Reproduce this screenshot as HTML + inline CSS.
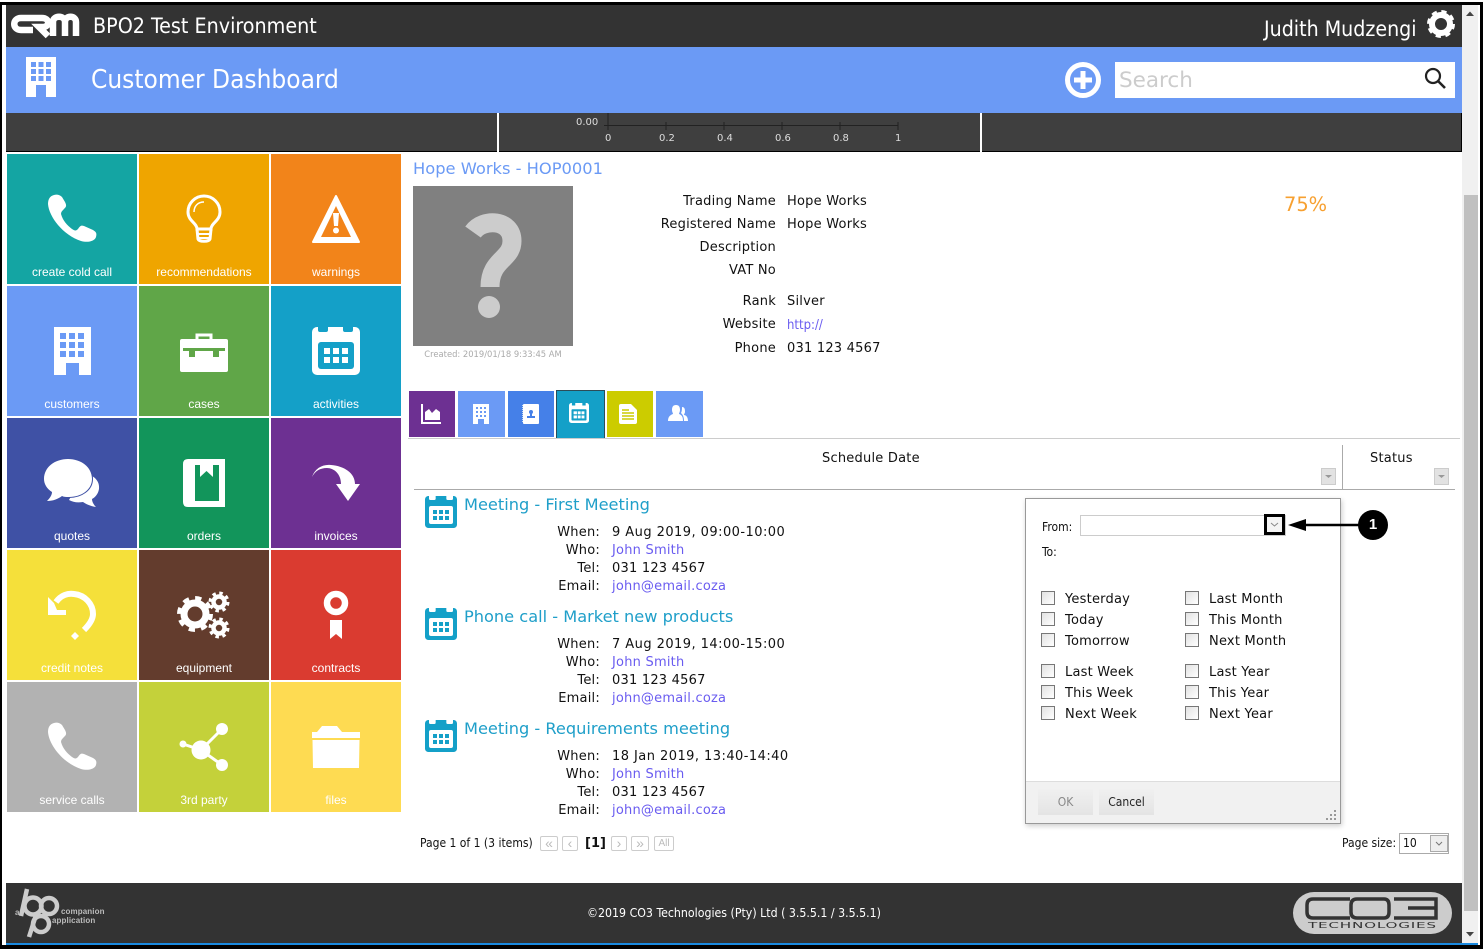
<!DOCTYPE html>
<html><head><meta charset="utf-8"><title>Customer Dashboard</title>
<style>
html,body{margin:0;padding:0;background:#fff}
body{width:1484px;height:949px;position:relative;overflow:hidden;font-family:"DejaVu Sans","Liberation Sans",sans-serif;font-size:13px;color:#111;letter-spacing:.22px}
.a{position:absolute}
.t{position:absolute;white-space:nowrap;line-height:24px;height:24px}
.r{text-align:right}
.c{font-family:"DejaVu Sans Condensed","DejaVu Sans",sans-serif;font-stretch:condensed;letter-spacing:0}
.tile{position:absolute;width:130px;height:130px;color:#fff}
.tile svg{position:absolute;left:41px;top:41px;overflow:visible}
.tile span{position:absolute;left:0;width:130px;top:110px;text-align:center;font:12px/16px "Liberation Sans",sans-serif;color:#fff;letter-spacing:0}
.tab{position:absolute;top:391px;height:46px}
.lnk{color:#6a5cf0}
.ttl{color:#1f9fc9;font-size:16.2px;letter-spacing:0}
.d{letter-spacing:.45px}
.ch{font-size:10px;color:#ddd;letter-spacing:0}
.cb{position:absolute;width:12px;height:12px;border:1px solid #777;background:linear-gradient(135deg,#e2e2e2,#fff)}
.pb{position:absolute;top:836px;height:13px;border:1px solid #ccc;border-radius:2px;color:#bbb;font:14px/12px "Liberation Sans",sans-serif;text-align:center;letter-spacing:0}
svg{display:block}
</style></head><body>
<svg width="0" height="0" style="position:absolute"><defs>
<symbol id="phone" viewBox="0 0 48 48" overflow="visible"><path fill="#fff" d="M6 0C2 1 0 4 0 9C1 22 15 40 33 46C40 48 47 46 48 42C49 38 48 37 45 35L36 31C33 30 32 31 30 34C28 36 27 36 24 34C19 30 15 26 13 19C13 17 14 16 16 14C18 12 19 11 17 7L14 2C12 0 9-1 6 0Z"/></symbol>
</defs></svg>

<!-- outer frame -->
<div class="a" style="left:0;top:2px;width:1483px;height:3px;background:#000"></div>
<div class="a" style="left:0;top:2px;width:2px;height:947px;background:#000"></div>
<div class="a" style="left:1480px;top:2px;width:3px;height:947px;background:#000"></div>
<div class="a" style="left:0;top:945px;width:1483px;height:4px;background:#000"></div>

<!-- header -->
<div class="a" style="left:6px;top:5px;width:1456px;height:42px;background:#333"></div>
<svg class="a" style="left:6px;top:5px" width="80" height="36" viewBox="6 5 80 36"><g fill="none" stroke="#fff" stroke-width="6.5"><path d="M37 18H21C12 18 12 30 21 30H33"/><path d="M37 18H42C50 18 50 27 43 27H39L48 36"/><path d="M53 36V22C53 15 65 15 65 22V36M65 22C65 15 76 15 76 22V36"/></g></svg>
<div class="t c" style="left:93px;top:15px;font-size:21.3px;color:#fff">BPO2 Test Environment</div>
<div class="t c" style="left:1264px;top:17px;font-size:21.2px;color:#fff">Judith Mudzengi</div>
<svg class="a" style="left:1427px;top:10px" width="28" height="28" viewBox="0 0 28 28"><circle cx="14" cy="14" r="9" fill="none" stroke="#fff" stroke-width="6"/><circle cx="14" cy="14" r="12" fill="none" stroke="#fff" stroke-width="4" stroke-dasharray="5 4.42"/></svg>

<!-- blue bar -->
<div class="a" style="left:6px;top:47px;width:1456px;height:66px;background:#6b9af5"></div>
<svg class="a" style="left:25px;top:57px" width="32" height="40" viewBox="0 0 32 40"><path fill="#fff" d="M1 0H31V40H21V28H11V40H1Z"/><g fill="#6b9af5"><rect x="6" y="5" width="5" height="5"/><rect x="13.500" y="5" width="5" height="5"/><rect x="21" y="5" width="5" height="5"/><rect x="6" y="12" width="5" height="5"/><rect x="13.500" y="12" width="5" height="5"/><rect x="21" y="12" width="5" height="5"/><rect x="6" y="19" width="5" height="5"/><rect x="13.500" y="19" width="5" height="5"/><rect x="21" y="19" width="5" height="5"/></g></svg>
<div class="t c" style="left:91px;top:68px;font-size:26px;color:#fff">Customer Dashboard</div>
<svg class="a" style="left:1065px;top:62px" width="36" height="36" viewBox="0 0 36 36"><circle cx="18" cy="18" r="15.500" fill="none" stroke="#fff" stroke-width="5"/><path d="M18 9V27M9 18H27" stroke="#fff" stroke-width="5"/></svg>
<div class="a" style="left:1115px;top:62px;width:340px;height:36px;background:#fff"></div>
<div class="t" style="left:1119px;top:69px;font-size:21.5px;color:#ccc;letter-spacing:0">Search</div>
<svg class="a" style="left:1424px;top:67px" width="22" height="22" viewBox="0 0 22 22"><circle cx="9" cy="9" r="7" fill="none" stroke="#222" stroke-width="2.200"/><path d="M14 14L21 21" stroke="#222" stroke-width="2.600"/></svg>

<!-- chart strip -->
<div class="a" style="left:6px;top:113px;width:1455px;height:38px;background:#3f3f3f;border-right:1px solid #000;border-bottom:1.500px solid #000"></div>
<div class="a" style="left:497px;top:113px;width:2px;height:39px;background:#fff"></div>
<div class="a" style="left:980px;top:113px;width:2px;height:39px;background:#fff"></div>
<svg class="a" style="left:600px;top:113px" width="305" height="18" viewBox="600 113 305 18"><path d="M608 113V130M604 125.500H898M666 122V130M724 122V130M782 122V130M840 122V130M898 122V130" stroke="#222" fill="none"/></svg>
<div class="t ch" style="left:576px;top:111px">0.00</div>
<div class="t ch" style="left:605px;top:127px">0</div>
<div class="t ch" style="left:659px;top:127px">0.2</div>
<div class="t ch" style="left:717px;top:127px">0.4</div>
<div class="t ch" style="left:775px;top:127px">0.6</div>
<div class="t ch" style="left:833px;top:127px">0.8</div>
<div class="t ch" style="left:895px;top:127px">1</div>

<!-- tiles -->
<div class="tile" style="left:7px;top:154px;background:#14a5a3"><svg width="48" height="48"><use href="#phone"/></svg><span>create cold call</span></div>

<div class="tile" style="left:139px;top:154px;background:#efa500"><svg width="48" height="48" viewBox="0 0 48 48"><g fill="none" stroke="#fff"><path stroke-width="3" d="M17 34C17 28 8 26 8 17A16 16 0 0 1 40 17C40 26 31 28 31 34Z"/><path stroke-width="1.500" d="M14 17C14 11 18 7 24 7"/><path stroke-width="3" d="M17 34L18 44C19 47 29 47 30 44L31 34"/><path stroke-width="2" d="M18 39H30M19 43H29"/></g></svg><span>recommendations</span></div>

<div class="tile" style="left:271px;top:154px;background:#f2841a"><svg width="48" height="48" viewBox="0 0 48 48"><path fill="#fff" stroke="#fff" stroke-width="2" stroke-linejoin="round" d="M24 1L47 47H1Z"/><path fill="#f2841a" d="M24 11L39 42H9Z"/><path fill="#fff" d="M21 18H27L26 31H22Z"/><circle cx="24" cy="35.500" r="3" fill="#fff"/></svg><span>warnings</span></div>

<div class="tile" style="left:7px;top:286px;background:#6b9af5"><svg width="48" height="48" viewBox="0 0 48 48"><path fill="#fff" d="M6 0H43V48H31V36H18V48H6Z"/><g fill="#6b9af5"><rect x="12" y="6" width="6" height="6"/><rect x="21" y="6" width="6" height="6"/><rect x="30" y="6" width="6" height="6"/><rect x="12" y="15" width="6" height="6"/><rect x="21" y="15" width="6" height="6"/><rect x="30" y="15" width="6" height="6"/><rect x="12" y="24" width="6" height="6"/><rect x="21" y="24" width="6" height="6"/><rect x="30" y="24" width="6" height="6"/></g></svg><span>customers</span></div>

<div class="tile" style="left:139px;top:286px;background:#60a648"><svg width="48" height="48" viewBox="0 0 48 48"><path fill="none" stroke="#fff" stroke-width="3" d="M17 13V8H31V13"/><rect x="0" y="12" width="48" height="33" rx="2" fill="#fff"/><path fill="#60a648" d="M3 21H45V24H39V30H33V24H15V30H9V24H3Z"/></svg><span>cases</span></div>

<div class="tile" style="left:271px;top:286px;background:#14a0c8"><svg width="48" height="48" viewBox="0 0 48 48"><rect width="48" height="48" rx="5" fill="#fff"/><g fill="#14a0c8"><path d="M6 0H16V3Q16 5 14 5H8Q6 5 6 3ZM31 0H41V3Q41 5 39 5H33Q31 5 31 3Z"/><rect x="6" y="15" width="36" height="27" rx="3"/></g><g fill="#fff"><rect x="12" y="21" width="6" height="6"/><rect x="21" y="21" width="6" height="6"/><rect x="30" y="21" width="6" height="6"/><rect x="12" y="30" width="6" height="6"/><rect x="21" y="30" width="6" height="6"/><rect x="30" y="30" width="6" height="6"/></g></svg><span>activities</span></div>

<div class="tile" style="left:7px;top:418px;background:#3f51a5"><svg width="48" height="48" viewBox="0 0 48 48"><path fill="#fff" d="M36 14C46 16 52 22 51 30C50 36 46 39 44 40C44 43 46 46 48 48C42 47 38 45 35 43C29 44 25 43 21 41Z"/><path fill="#fff" stroke="#3f51a5" stroke-width="2" paint-order="stroke" d="M20 0C33 0 44 8 44 20C44 31 33 38 21 38C18 38 16 38 14 37C10 40 5 42-1 42C2 39 4 36 4 33C-1 30-4 25-4 20C-4 8 7 0 20 0Z"/></svg><span>quotes</span></div>

<div class="tile" style="left:139px;top:418px;background:#12955b"><svg width="48" height="48" viewBox="0 0 48 48"><path fill="#fff" d="M8 0H45V48H8Q3 48 3 43V5Q3 0 8 0Z"/><path fill="#12955b" d="M15 6H20V18L26.500 12L33 18V6H39V42H15Z"/></svg><span>orders</span></div>

<div class="tile" style="left:271px;top:418px;background:#6d3092"><svg width="48" height="48" viewBox="0 0 48 48"><path fill="#fff" d="M0 18C3 9 11 5 19 6C32 7 43 14 43 25H48L36 42L24 25H29C29 15 22 9 15 9C8 9 3 12 0 18Z"/></svg><span>invoices</span></div>

<div class="tile" style="left:7px;top:550px;background:#f5e03a"><svg width="48" height="48" viewBox="0 0 48 48"><path fill="#fff" d="M0 6V24H18V19H9L6 12Z"/><path fill="none" stroke="#fff" stroke-width="6" d="M8 11C13 4 20 2 26 3C37 4 45 13 45 23C45 29 40 35 36 39"/><path fill="#fff" d="M27 41L31 45L27 49L23 45Z"/></svg><span>credit notes</span></div>

<div class="tile" style="left:139px;top:550px;background:#633c2d"><svg width="48" height="48" viewBox="0 0 48 48"><g fill="none" stroke="#fff"><circle cx="15" cy="23" r="11" stroke-width="7"/><circle cx="15" cy="23" r="16" stroke-width="4" stroke-dasharray="6.300 6.270"/><circle cx="39" cy="11" r="5.500" stroke-width="4.500"/><circle cx="39" cy="11" r="9" stroke-width="3" stroke-dasharray="3.500 3.570"/><circle cx="39" cy="37" r="5.500" stroke-width="4.500"/><circle cx="39" cy="37" r="9" stroke-width="3" stroke-dasharray="3.500 3.570"/></g></svg><span>equipment</span></div>

<div class="tile" style="left:271px;top:550px;background:#da3b30"><svg width="48" height="48" viewBox="0 0 48 48"><circle cx="24" cy="12" r="9" fill="none" stroke="#fff" stroke-width="6.500"/><path fill="#fff" d="M18 29H30V48L24 43L18 48Z"/></svg><span>contracts</span></div>

<div class="tile" style="left:7px;top:682px;background:#b2b2b2"><svg width="48" height="48"><use href="#phone"/></svg><span>service calls</span></div>

<div class="tile" style="left:139px;top:682px;background:#c4d13a"><svg width="48" height="48" viewBox="0 0 48 48"><path fill="none" stroke="#fff" stroke-width="3" d="M3 21L21 27M21 27L42 6M21 27L42 42"/><g fill="#fff"><circle cx="21" cy="27" r="9.500"/><circle cx="42" cy="6" r="6"/><circle cx="42" cy="42" r="6"/><circle cx="3" cy="21" r="3.500"/></g></svg><span>3rd party</span></div>

<div class="tile" style="left:271px;top:682px;background:#fedb52"><svg width="48" height="48" viewBox="0 0 48 48"><path fill="#fff" d="M5 9L10 3H25L30 9H48V15H0V9ZM0.500 17H47.500L47 45H1Z"/></svg><span>files</span></div>

<!-- customer info -->
<div class="t" style="left:413px;top:157px;font-size:16.3px;color:#6b9af5;letter-spacing:0">Hope Works - HOP0001</div>
<div class="a" style="left:413px;top:186px;width:160px;height:160px;background:#808080"></div>
<svg class="a" style="left:413px;top:186px" width="160" height="160" viewBox="413 186 160 160"><path d="M473 232C483 218 512 219 512 241C512 260 490 259 490 287" fill="none" stroke="#ccc" stroke-width="19"/><circle cx="489" cy="307" r="11" fill="#ccc"/></svg>
<div class="t" style="left:413px;top:342px;width:160px;text-align:center;font-size:8.4px;color:#aaa;letter-spacing:0">Created: 2019/01/18 9:33:45 AM</div>

<div class="t r" style="left:576px;width:200px;top:190px">Trading Name</div><div class="t" style="left:787px;top:190px">Hope Works</div>
<div class="t r" style="left:576px;width:200px;top:213px">Registered Name</div><div class="t" style="left:787px;top:213px">Hope Works</div>
<div class="t r" style="left:576px;width:200px;top:236px">Description</div>
<div class="t r" style="left:576px;width:200px;top:259px">VAT No</div>
<div class="t r" style="left:576px;width:200px;top:290px">Rank</div><div class="t" style="left:787px;top:290px">Silver</div>
<div class="t r" style="left:576px;width:200px;top:313px">Website</div><div class="t lnk c" style="left:787px;top:314px;font-size:13px">http://</div>
<div class="t r" style="left:576px;width:200px;top:337px">Phone</div><div class="t" style="left:787px;top:337px">031 123 4567</div>
<div class="t" style="left:1284px;top:193px;font-size:19.4px;color:#f7a030;letter-spacing:0">75%</div>

<!-- tabs -->
<div class="tab" style="left:409px;width:46px;background:#6d3092"><svg class="a" style="left:12px;top:13px" width="20" height="20" viewBox="0 0 20 20"><path fill="none" stroke="#fff" stroke-width="2" d="M1 0V19H20"/><path fill="#fff" d="M4 16V8L8 5L11 9L15 5L19 8V16Z"/></svg></div>
<div class="tab" style="left:458px;width:47px;background:#6b9af5"><svg class="a" style="left:15px;top:13px" width="16" height="20" viewBox="0 0 16 20"><path fill="#fff" d="M0 0H16V20H11V15H5V20H0Z"/><g fill="#6b9af5"><rect x="3" y="3" width="2" height="2"/><rect x="7" y="3" width="2" height="2"/><rect x="11" y="3" width="2" height="2"/><rect x="3" y="7" width="2" height="2"/><rect x="7" y="7" width="2" height="2"/><rect x="11" y="7" width="2" height="2"/><rect x="3" y="11" width="2" height="2"/><rect x="7" y="11" width="2" height="2"/><rect x="11" y="11" width="2" height="2"/></g></svg></div>
<div class="tab" style="left:508px;width:46px;background:#4580e8"><svg class="a" style="left:14px;top:13px" width="17" height="20" viewBox="0 0 17 20"><rect x="1" width="16" height="20" rx="1" fill="#fff"/><path stroke="#cde" stroke-width="1" stroke-dasharray="1 1" d="M.5 1V19"/><circle cx="9" cy="8" r="2" fill="#4580e8"/><path fill="#4580e8" d="M8 8H10V12H13V14H5V12H8Z"/></svg></div>
<div class="tab" style="left:556px;top:390px;width:47px;height:48px;background:#14a0c8;border:1px solid #2c4c58;border-bottom:0"><svg class="a" style="left:12px;top:12px" width="20" height="20" viewBox="0 0 48 48"><rect width="48" height="48" rx="6" fill="#fff"/><g fill="#14a0c8"><path d="M7 0H15V6H7ZM32 0H40V6H32Z"/><rect x="6" y="15" width="36" height="27" rx="2"/></g><g fill="#fff"><rect x="11" y="20" width="8" height="7"/><rect x="21" y="20" width="7" height="7"/><rect x="30" y="20" width="7" height="7"/><rect x="11" y="30" width="8" height="7"/><rect x="21" y="30" width="7" height="7"/><rect x="30" y="30" width="7" height="7"/></g></svg></div>
<div class="tab" style="left:607px;width:46px;background:#cccc00"><svg class="a" style="left:12px;top:13px" width="18" height="20" viewBox="0 0 18 20"><path fill="#fff" d="M2 0H12L18 6V18Q18 20 16 20H2Q0 20 0 18V2Q0 0 2 0Z"/><path stroke="#cccc00" stroke-width="1.500" d="M3 9H15M3 12H15M3 15H15M3 6H10"/></svg></div>
<div class="tab" style="left:656px;width:47px;background:#6b9af5"><svg class="a" style="left:12px;top:14px" width="20" height="17" viewBox="0 0 20 17"><path fill="#fff" d="M8 0C11 0 12 2 12 5C12 7 11 8 11 9C14 10 15 12 15 16H0C0 12 2 10 5 9C5 8 4 7 4 5C4 2 5 0 8 0Z"/><path fill="#fff" d="M14 2C17 2 17 5 17 7C17 8 16 9 16 10C18 10 20 12 20 16H16C16 12 15 10 13 8C14 6 14 4 14 2Z"/></svg></div>
<div class="a" style="left:408px;top:438px;width:1052px;height:1px;background:#ccc"></div>

<!-- table header -->
<div class="t" style="left:822px;top:447px">Schedule Date</div>
<div class="t" style="left:1370px;top:447px">Status</div>
<div class="a" style="left:1342px;top:445px;width:1px;height:44px;background:#aaa"></div>
<div class="a" style="left:414px;top:489px;width:1041px;height:1px;background:#aaa"></div>
<svg class="a" style="left:1321px;top:468px" width="15" height="17" viewBox="0 0 15 17"><rect x=".5" y=".5" width="14" height="16" fill="#e2e2e2" stroke="#ccc"/><path d="M4 7H11L7.500 10Z" fill="#999"/></svg>
<svg class="a" style="left:1434px;top:468px" width="15" height="17" viewBox="0 0 15 17"><rect x=".5" y=".5" width="14" height="16" fill="#e2e2e2" stroke="#ccc"/><path d="M4 7H11L7.500 10Z" fill="#999"/></svg>

<!-- activity 1 -->
<svg class="a" style="left:425px;top:496px" width="32" height="32" viewBox="0 0 48 48"><rect width="48" height="48" rx="5" fill="#14a0c8"/><g fill="#fff"><path d="M6 0H16V4Q16 6 14 6H8Q6 6 6 4ZM32 0H42V4Q42 6 40 6H34Q32 6 32 4Z"/><rect x="6" y="15" width="36" height="27" rx="3"/></g><g fill="#14a0c8"><rect x="12" y="21" width="6" height="6"/><rect x="21" y="21" width="6" height="6"/><rect x="30" y="21" width="6" height="6"/><rect x="12" y="30" width="6" height="6"/><rect x="21" y="30" width="6" height="6"/><rect x="30" y="30" width="6" height="6"/></g></svg>
<div class="t ttl" style="left:464px;top:493px">Meeting - First Meeting</div>
<div class="t r" style="left:500px;width:100px;top:521px">When:</div><div class="t d" style="left:612px;top:521px">9 Aug 2019, 09:00-10:00</div>
<div class="t r" style="left:500px;width:100px;top:539px">Who:</div><div class="t lnk" style="left:612px;top:539px">John Smith</div>
<div class="t r" style="left:500px;width:100px;top:557px">Tel:</div><div class="t" style="left:612px;top:557px">031 123 4567</div>
<div class="t r" style="left:500px;width:100px;top:575px">Email:</div><div class="t lnk" style="left:612px;top:575px">john@email.coza</div>

<!-- activity 2 -->
<svg class="a" style="left:425px;top:608px" width="32" height="32" viewBox="0 0 48 48"><rect width="48" height="48" rx="5" fill="#14a0c8"/><g fill="#fff"><path d="M6 0H16V4Q16 6 14 6H8Q6 6 6 4ZM32 0H42V4Q42 6 40 6H34Q32 6 32 4Z"/><rect x="6" y="15" width="36" height="27" rx="3"/></g><g fill="#14a0c8"><rect x="12" y="21" width="6" height="6"/><rect x="21" y="21" width="6" height="6"/><rect x="30" y="21" width="6" height="6"/><rect x="12" y="30" width="6" height="6"/><rect x="21" y="30" width="6" height="6"/><rect x="30" y="30" width="6" height="6"/></g></svg>
<div class="t ttl" style="left:464px;top:605px">Phone call - Market new products</div>
<div class="t r" style="left:500px;width:100px;top:633px">When:</div><div class="t d" style="left:612px;top:633px">7 Aug 2019, 14:00-15:00</div>
<div class="t r" style="left:500px;width:100px;top:651px">Who:</div><div class="t lnk" style="left:612px;top:651px">John Smith</div>
<div class="t r" style="left:500px;width:100px;top:669px">Tel:</div><div class="t" style="left:612px;top:669px">031 123 4567</div>
<div class="t r" style="left:500px;width:100px;top:687px">Email:</div><div class="t lnk" style="left:612px;top:687px">john@email.coza</div>

<!-- activity 3 -->
<svg class="a" style="left:425px;top:720px" width="32" height="32" viewBox="0 0 48 48"><rect width="48" height="48" rx="5" fill="#14a0c8"/><g fill="#fff"><path d="M6 0H16V4Q16 6 14 6H8Q6 6 6 4ZM32 0H42V4Q42 6 40 6H34Q32 6 32 4Z"/><rect x="6" y="15" width="36" height="27" rx="3"/></g><g fill="#14a0c8"><rect x="12" y="21" width="6" height="6"/><rect x="21" y="21" width="6" height="6"/><rect x="30" y="21" width="6" height="6"/><rect x="12" y="30" width="6" height="6"/><rect x="21" y="30" width="6" height="6"/><rect x="30" y="30" width="6" height="6"/></g></svg>
<div class="t ttl" style="left:464px;top:717px">Meeting - Requirements meeting</div>
<div class="t r" style="left:500px;width:100px;top:745px">When:</div><div class="t d" style="left:612px;top:745px">18 Jan 2019, 13:40-14:40</div>
<div class="t r" style="left:500px;width:100px;top:763px">Who:</div><div class="t lnk" style="left:612px;top:763px">John Smith</div>
<div class="t r" style="left:500px;width:100px;top:781px">Tel:</div><div class="t" style="left:612px;top:781px">031 123 4567</div>
<div class="t r" style="left:500px;width:100px;top:799px">Email:</div><div class="t lnk" style="left:612px;top:799px">john@email.coza</div>

<!-- pager -->
<div class="t c" style="left:420px;top:831px;font-size:12px">Page 1 of 1 (3 items)</div>
<div class="pb" style="left:540px;width:16px">&#171;</div>
<div class="pb" style="left:562px;width:14px">&#8249;</div>
<div class="t" style="left:585px;top:832px;font-size:13px;font-weight:bold;letter-spacing:0">[1]</div>
<div class="pb" style="left:611px;width:14px">&#8250;</div>
<div class="pb" style="left:631px;width:16px">&#187;</div>
<div class="pb" style="left:654px;width:18px;font-size:10px;line-height:14px">All</div>
<div class="t c" style="left:1342px;top:831px;font-size:12px">Page size:</div>
<div class="a" style="left:1399px;top:833px;width:48px;height:19px;border:1px solid #aaa"></div>
<div class="t c" style="left:1403px;top:831px;font-size:12px">10</div>
<svg class="a" style="left:1430px;top:835px" width="18" height="17" viewBox="0 0 18 17"><rect x=".5" y=".5" width="17" height="16" fill="#eee" stroke="#aaa"/><path d="M6 7L9 10L12 7" fill="none" stroke="#777"/></svg>

<!-- dialog -->
<div class="a" style="left:1025px;top:498px;width:314px;height:324px;background:#fff;border:1px solid #999;box-shadow:1px 2px 5px rgba(0,0,0,.2)"></div>
<div class="a" style="left:1026px;top:781px;width:314px;height:42px;background:#f1f1f1;border-top:1px solid #ddd;box-sizing:border-box"></div>
<div class="t c" style="left:1042px;top:515px;font-size:12px">From:</div>
<div class="a" style="left:1080px;top:515px;width:204px;height:19px;border:1px solid #ccc"></div>
<svg class="a" style="left:1264px;top:514px" width="21" height="21" viewBox="0 0 21 21"><rect x="1.500" y="1.500" width="18" height="18" fill="#f4f4f4" stroke="#000" stroke-width="3"/><path d="M7 9L10.500 12L14 9" fill="none" stroke="#888"/></svg>
<div class="t c" style="left:1042px;top:540px;font-size:12px">To:</div>

<div class="cb" style="left:1041px;top:591px"></div><div class="t" style="left:1065px;top:588px">Yesterday</div>
<div class="cb" style="left:1041px;top:612px"></div><div class="t" style="left:1065px;top:609px">Today</div>
<div class="cb" style="left:1041px;top:633px"></div><div class="t" style="left:1065px;top:630px">Tomorrow</div>
<div class="cb" style="left:1041px;top:664px"></div><div class="t" style="left:1065px;top:661px">Last Week</div>
<div class="cb" style="left:1041px;top:685px"></div><div class="t" style="left:1065px;top:682px">This Week</div>
<div class="cb" style="left:1041px;top:706px"></div><div class="t" style="left:1065px;top:703px">Next Week</div>
<div class="cb" style="left:1185px;top:591px"></div><div class="t" style="left:1209px;top:588px">Last Month</div>
<div class="cb" style="left:1185px;top:612px"></div><div class="t" style="left:1209px;top:609px">This Month</div>
<div class="cb" style="left:1185px;top:633px"></div><div class="t" style="left:1209px;top:630px">Next Month</div>
<div class="cb" style="left:1185px;top:664px"></div><div class="t" style="left:1209px;top:661px">Last Year</div>
<div class="cb" style="left:1185px;top:685px"></div><div class="t" style="left:1209px;top:682px">This Year</div>
<div class="cb" style="left:1185px;top:706px"></div><div class="t" style="left:1209px;top:703px">Next Year</div>

<div class="a" style="left:1038px;top:789px;width:55px;height:26px;background:linear-gradient(#f0f0f0,#e4e4e4)"></div>
<div class="t c" style="left:1038px;top:790px;width:55px;text-align:center;font-size:12px;color:#888">OK</div>
<div class="a" style="left:1099px;top:789px;width:55px;height:26px;background:linear-gradient(#f0f0f0,#e4e4e4)"></div>
<div class="t c" style="left:1099px;top:790px;width:55px;text-align:center;font-size:12px;color:#222">Cancel</div>
<svg class="a" style="left:1326px;top:809px" width="12" height="12" viewBox="0 0 12 12"><g fill="#999"><rect x="8" y="1" width="2" height="2"/><rect x="4" y="5" width="2" height="2"/><rect x="8" y="5" width="2" height="2"/><rect y="9" width="2" height="2"/><rect x="4" y="9" width="2" height="2"/><rect x="8" y="9" width="2" height="2"/></g></svg>

<!-- callout -->
<svg class="a" style="left:1285px;top:508px" width="106" height="34" viewBox="1285 508 106 34"><path d="M1300 525H1362" stroke="#000" stroke-width="2.500"/><path d="M1288 525L1306 519V531Z" fill="#000"/><circle cx="1373" cy="525" r="15" fill="#000"/></svg>
<div class="t" style="left:1358px;top:515px;width:30px;text-align:center;font:bold 15px/20px 'Liberation Sans',sans-serif;color:#fff;letter-spacing:0">1</div>

<!-- footer -->
<div class="a" style="left:6px;top:883px;width:1456px;height:60px;background:#333"></div>
<div class="a" style="left:6px;top:943px;width:1472px;height:1.500px;background:#1a8ae0"></div>
<svg class="a" style="left:10px;top:885px" width="60" height="56" viewBox="10 885 60 56"><g fill="none" stroke="#ccc" stroke-width="4.500"><circle cx="33" cy="906" r="8.500"/><path d="M27 889L21 916"/><circle cx="49" cy="906" r="8"/><circle cx="41" cy="924" r="8"/><path d="M36 915L29 937"/></g></svg>
<div class="t" style="left:15px;top:903px;font:bold 8px/20px 'Liberation Sans',sans-serif;color:#bbb;letter-spacing:0">a</div>
<div class="t" style="left:61px;top:902px;font:bold 8px/20px 'Liberation Sans',sans-serif;color:#bbb;letter-spacing:.1px">companion</div>
<div class="t" style="left:52px;top:911px;font:bold 8px/20px 'Liberation Sans',sans-serif;color:#bbb;letter-spacing:.1px">application</div>
<div class="t c" style="left:587px;top:901px;font-size:12.250px;color:#fff">©2019 CO3 Technologies (Pty) Ltd ( 3.5.5.1 / 3.5.5.1)</div>
<div class="a" style="left:1293px;top:892px;width:159px;height:42px;border-radius:21px;background:#ccc"></div>
<svg class="a" style="left:1293px;top:892px" width="159" height="42" viewBox="1293 892 159 42"><g fill="none" stroke="#333" stroke-width="3.500"><path d="M1350 899H1313Q1307 899 1307 905V912Q1307 918 1313 918H1350"/><path d="M1357 899H1384Q1389 899 1389 905V912Q1389 918 1384 918H1357Q1351 918 1351 912V905Q1351 899 1357 899Z"/><path d="M1394 899H1436V908H1408M1436 908V918H1394"/></g></svg>
<div class="t" style="left:1308px;top:914px;font-size:8px;color:#333;letter-spacing:.4px;transform:scaleX(1.9);transform-origin:0 50%">TECHNOLOGIES</div>

<!-- scrollbar -->
<div class="a" style="left:1462px;top:5px;width:16px;height:938px;background:#f0f0f0"></div>
<div class="a" style="left:1464px;top:195px;width:14px;height:716px;background:#c0c0c0"></div>
<svg class="a" style="left:1464px;top:10px" width="12" height="8" viewBox="0 0 12 8"><path d="M6 1.500L10 6H2Z" fill="#444"/></svg>
<svg class="a" style="left:1464px;top:930px" width="12" height="8" viewBox="0 0 12 8"><path d="M6 6.500L10 2H2Z" fill="#444"/></svg>
</body></html>
